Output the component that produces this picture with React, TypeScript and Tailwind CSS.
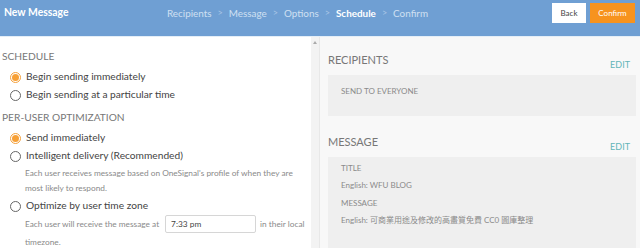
import React from "react";

const font = { fontFamily: "Lato, 'Noto Sans CJK TC', sans-serif" };

function Radio({ checked, label }: { checked?: boolean; label: string }) {
  return (
    <div className="flex items-center h-[18px] pl-[8px]">
      {checked ? (
        <span className="w-[11px] h-[11px] rounded-full border border-[#f5a03a] flex items-center justify-center">
          <span className="w-[7px] h-[7px] rounded-full bg-[#f7a036]" />
        </span>
      ) : (
        <span className="w-[11px] h-[11px] rounded-full border border-[#666]" />
      )}
      <span className="ml-[5px] text-[10.2px] text-[#444]">{label}</span>
    </div>
  );
}

function Crumb({ text, active }: { text: string; active?: boolean }) {
  return (
    <span className={active ? "text-white font-bold" : "text-[#cfe0f2]"}>{text}</span>
  );
}

function Sep() {
  return <span className="text-[#a9c6e6] mx-[6px] text-[9px]">&gt;</span>;
}

function Card({ title, children, boxCls }: { title: string; children: React.ReactNode; boxCls: string }) {
  return (
    <div>
      <div className="flex justify-between items-end pr-[6px]">
        <span className="text-[11px] text-[#777] leading-none">{title}</span>
        <span className="text-[9px] text-[#63b5b8] leading-none translate-y-[4px]">EDIT</span>
      </div>
      <div className={"bg-[#efefef] mt-[10px] px-[13px] text-[8px] text-[#8a8a8a] " + boxCls}>{children}</div>
    </div>
  );
}

export default function App() {
  return (
    <div className="w-[640px] h-[248px] overflow-hidden bg-white flex flex-col" style={font}>
      <div className="h-[36px] bg-[#6f9fd3] flex items-start pt-[3px] px-[4px] shrink-0">
        <div className="h-[20px] flex items-center text-white font-bold text-[10.4px] w-[163px]">New Message</div>
        <div className="h-[20px] flex items-center text-[9.9px] flex-1">
          <Crumb text="Recipients" />
          <Sep />
          <Crumb text="Message" />
          <Sep />
          <Crumb text="Options" />
          <Sep />
          <Crumb text="Schedule" active />
          <Sep />
          <Crumb text="Confirm" />
        </div>
        <button className="h-[20px] w-[34px] bg-white text-[#444] text-[8px] flex items-center justify-center mr-[4px]">Back</button>
        <button className="h-[20px] w-[45px] bg-[#f7931e] text-white text-[8px] flex items-center justify-center mr-[1px]">Confirm</button>
      </div>
      <div className="h-[1px] bg-[#e4eef7] shrink-0" />
      <div className="flex flex-1 min-h-0">
        <div className="w-[311px] pl-[2px] pt-[11px] shrink-0">
          <div className="text-[10.2px] text-[#777] h-[16px] leading-[16px]">SCHEDULE</div>
          <div className="mt-[4px]">
            <Radio checked label="Begin sending immediately" />
            <Radio label="Begin sending at a particular time" />
          </div>
          <div className="text-[10.2px] text-[#777] h-[16px] leading-[16px] mt-[5px]">PER-USER OPTIMIZATION</div>
          <div className="mt-[4px]">
            <Radio checked label="Send immediately" />
            <Radio label="Intelligent delivery (Recommended)" />
          </div>
          <div className="pl-[23px] text-[8.3px] text-[#8a8a8a] leading-[15px] mt-[1px]">
            Each user receives message based on OneSignal's profile of when they are
            <br />
            most likely to respond.
          </div>
          <div className="mt-[1px]">
            <Radio label="Optimize by user time zone" />
          </div>
          <div className="pl-[23px] text-[8.3px] text-[#8a8a8a] flex items-center">
            <span>Each user will receive the message at</span>
            <span className="ml-[6px] w-[91px] h-[18px] border border-[#d6d6d6] rounded-[2px] flex items-center px-[5px] text-[#444]">7:33 pm</span>
            <span className="ml-[4px]">in their local</span>
          </div>
          <div className="pl-[23px] text-[8.3px] text-[#8a8a8a] mt-[3px] leading-[12px]">timezone.</div>
        </div>
        <div className="w-[8px] bg-[#f3f3f3] shrink-0 flex justify-center pt-[4px]">
          <span className="w-0 h-0 border-l-[2px] border-r-[2px] border-b-[3px] border-l-transparent border-r-transparent border-b-[#aaa]" />
        </div>
        <div className="flex-1 bg-[#f8f8f8] border-l border-[#e8e8e8] pl-[8px] pr-[4px] pt-[17px]">
          <Card title="RECIPIENTS" boxCls="h-[41px] pt-[10px]">
            SEND TO EVERYONE
          </Card>
          <div className="mt-[20px]">
            <Card title="MESSAGE" boxCls="pt-[3px] pb-[20px] leading-[17.3px]">
              <div>TITLE</div>
              <div>English: WFU BLOG</div>
              <div>MESSAGE</div>
              <div>English: 可商業用途及修改的高畫質免費 CC0 圖庫整理</div>
            </Card>
          </div>
        </div>
      </div>
    </div>
  );
}
